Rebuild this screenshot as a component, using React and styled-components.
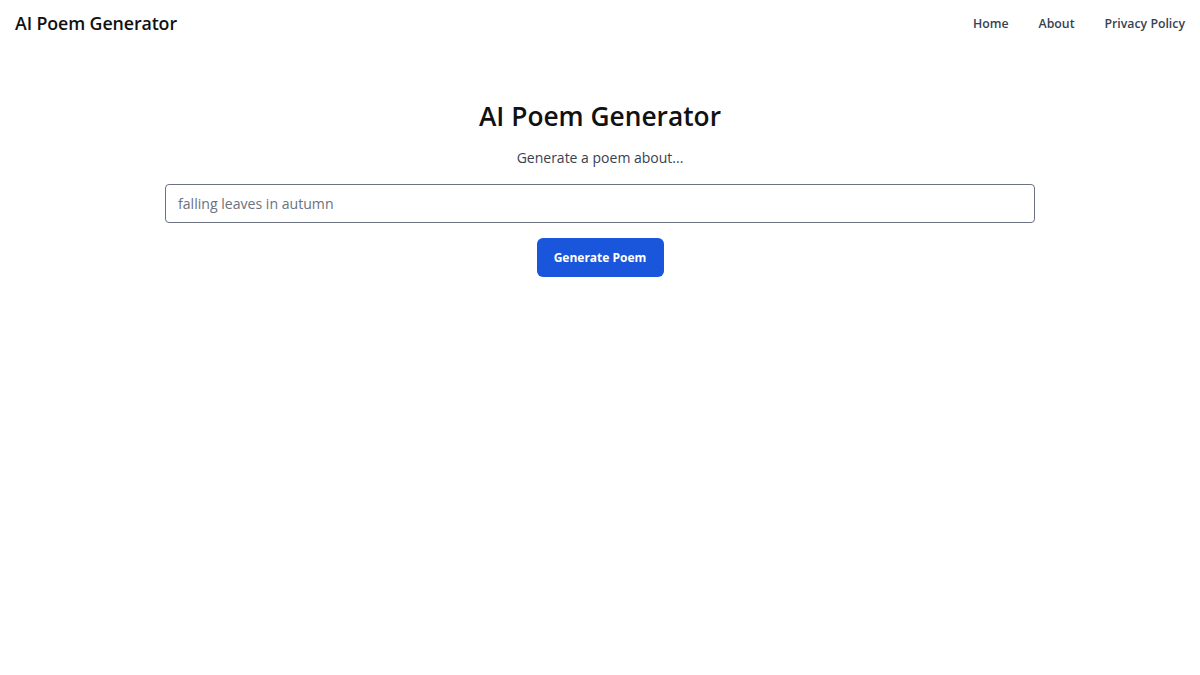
import React from "react";
import styled, { createGlobalStyle } from "styled-components";

const Global = createGlobalStyle`
  html, body { margin: 0; padding: 0; background: #ffffff; }
  body { font-family: "Open Sans", "Noto Sans", "Liberation Sans", sans-serif; color: #111827; }
  * { box-sizing: border-box; }
`;

const Header = styled.header`
  display: flex;
  align-items: center;
  justify-content: space-between;
  height: 46px;
  padding: 0 15px 0 15px;
`;

const Brand = styled.div`
  font-size: 17.8px;
  font-weight: 600;
  color: #111111;
  letter-spacing: -0.1px;
`;

const Nav = styled.nav`
  display: flex;
  gap: 30px;
`;

const NavLink = styled.a`
  font-size: 12.3px;
  font-weight: 600;
  color: #374151;
  text-decoration: none;
  cursor: pointer;
`;

const Main = styled.main`
  display: flex;
  flex-direction: column;
  align-items: center;
  padding-top: 50px;
`;

const Title = styled.h1`
  margin: 0;
  font-size: 26.3px;
  font-weight: 600;
  color: #111111;
  line-height: 40px;
`;

const Subtitle = styled.p`
  margin: 12px 0 0;
  font-size: 14px;
  color: #374151;
  line-height: 20px;
`;

const Input = styled.input`
  margin-top: 16px;
  width: 870px;
  height: 39px;
  padding: 0 12px;
  border: 1px solid #6b7280;
  border-radius: 4px;
  font-family: inherit;
  font-size: 14.1px;
  color: #111827;
  outline: none;
  &::placeholder { color: #6b7280; }
`;

const Button = styled.button`
  margin-top: 15px;
  width: 127px;
  height: 39px;
  border: none;
  border-radius: 6px;
  background: #1a56db;
  color: #ffffff;
  font-family: inherit;
  font-size: 12px;
  font-weight: 700;
  cursor: pointer;
`;

export default function App() {
  return (
    <>
      <Global />
      <Header>
        <Brand>AI Poem Generator</Brand>
        <Nav>
          <NavLink>Home</NavLink>
          <NavLink>About</NavLink>
          <NavLink>Privacy Policy</NavLink>
        </Nav>
      </Header>
      <Main>
        <Title>AI Poem Generator</Title>
        <Subtitle>Generate a poem about...</Subtitle>
        <Input placeholder="falling leaves in autumn" />
        <Button>Generate Poem</Button>
      </Main>
    </>
  );
}
